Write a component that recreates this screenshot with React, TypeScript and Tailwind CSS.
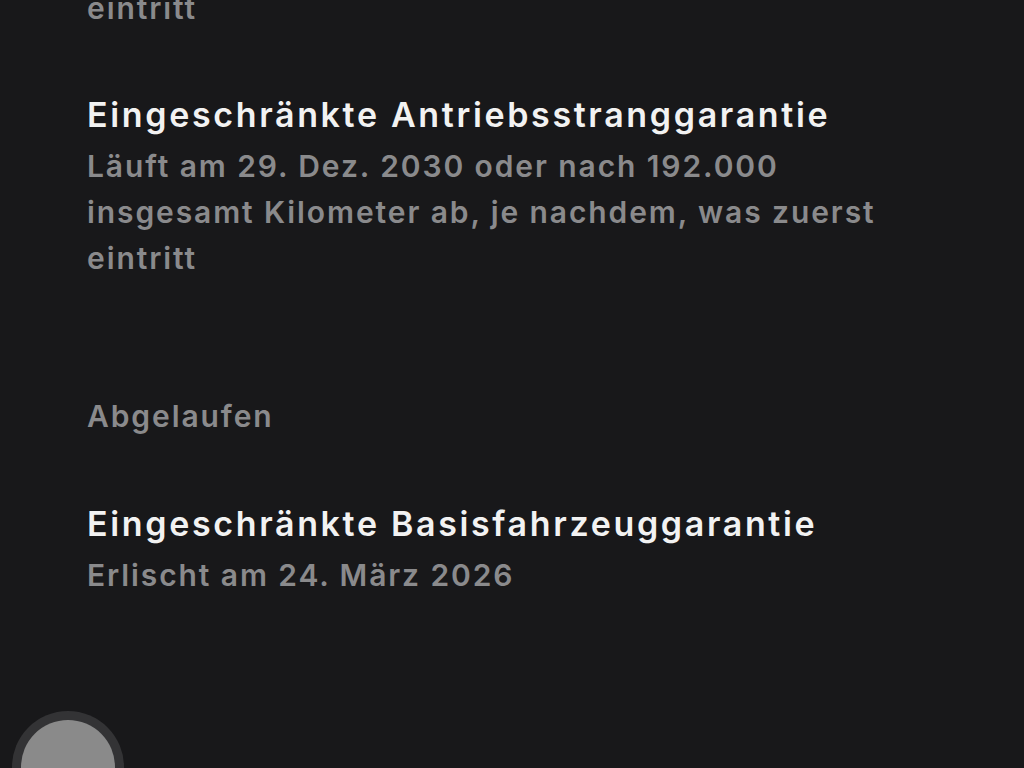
import React from "react";

const font = { fontFamily: "Inter, 'Noto Sans', sans-serif" };

function Item({ title, sub }: { title: string; sub: string }) {
  return (
    <div className="flex flex-col">
      <div className="text-[34px] leading-[44px] font-semibold tracking-[2.65px] text-[#f2f2f2]">{title}</div>
      <div className="mt-[6px] text-[30px] leading-[46px] font-semibold tracking-[1.9px] text-[#8a8a8c] max-w-[820px]">{sub}</div>
    </div>
  );
}

export default function App() {
  return (
    <div className="relative w-[1024px] h-[768px] overflow-hidden bg-[#18181a]" style={font}>
      <div className="flex flex-col pl-[87px] mt-[-15px]">
        <div className="text-[30px] leading-[46px] font-semibold tracking-[1.9px] text-[#8a8a8c]">eintritt</div>
        <div className="mt-[62px]">
          <Item
            title="Eingeschränkte Antriebsstranggarantie"
            sub="Läuft am 29. Dez. 2030 oder nach 192.000 insgesamt Kilometer ab, je nachdem, was zuerst eintritt"
          />
        </div>
        <div className="mt-[112px] text-[30px] leading-[46px] font-semibold tracking-[1.9px] text-[#8a8a8c]">Abgelaufen</div>
        <div className="mt-[63px]">
          <Item title="Eingeschränkte Basisfahrzeuggarantie" sub="Erlischt am 24. März 2026" />
        </div>
      </div>
      <div className="absolute left-[12px] top-[711px] w-[112px] h-[112px] rounded-full bg-[#333335] flex items-center justify-center">
        <div className="w-[94px] h-[94px] rounded-full bg-[#8a8a8a]" />
      </div>
    </div>
  );
}
